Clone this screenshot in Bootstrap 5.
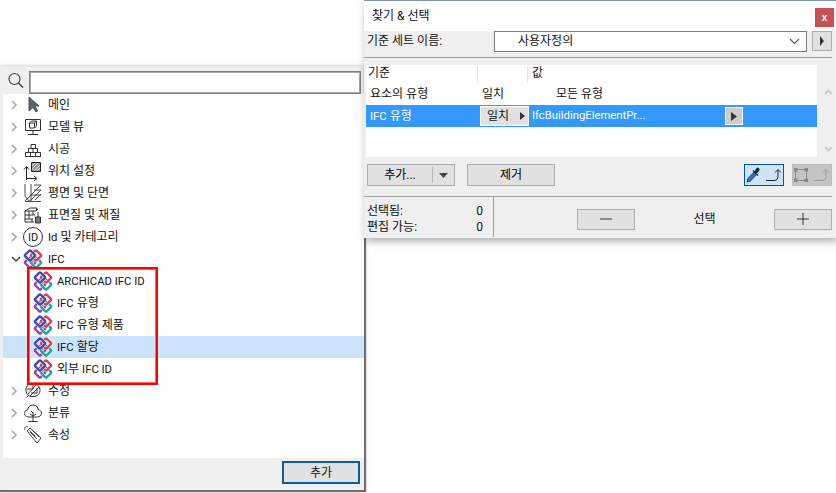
<!DOCTYPE html>
<html lang="ko"><head><meta charset="utf-8"><title>찾기 & 선택</title>
<link rel="stylesheet" href="https://cdn.jsdelivr.net/npm/bootstrap@5.3.0/dist/css/bootstrap.min.css">
<style>
html,body{margin:0;background:#fff;overflow:hidden}
body{font:12px/1.2 Roboto,"Noto Sans CJK KR",sans-serif;color:#111;width:836px;height:493px;position:relative}
svg{display:block;flex:none}
.lat{font-size:11.3px}
.pane-left{position:absolute;left:0;top:66px;width:366px;height:426px;background:#efefef;border-right:2px solid #6f6f6f;border-bottom:2px solid #6f6f6f;border-top:1px solid #e4e4e4;box-shadow:0 0 3px rgba(0,0,0,.25)}
.pane-right{position:absolute;left:364px;top:0;width:472px;height:238px;background:#efefef;border-top:1px solid #7f97ad;box-shadow:2px 3px 8px rgba(0,0,0,.35)}
.finder{height:27px;padding-left:3px}
.finder input{margin:3px 0 0 2px;width:332px;height:23px;border:1px solid #808080;outline:1px solid #a8a8a8;outline-offset:-2px;background:#fff;padding:0}
.tree{background:#fff;margin-left:3px;height:364px}
.trow{height:22px;padding-left:8px}
.trow.kid{padding-left:30px}
.trow .chev{width:10px;margin-right:2px}
.trow .ico{width:20px;margin-right:5px}
.trow.kid .ico{margin-right:4px}
.trow .tlabel{padding-top:1px}
.trow.sel{background:#cce4fb}
.foot{height:32px;padding:3px 4px 3px 0}
.okbtn{width:78px;height:23px;border:2px solid #0b5c9e;background:#e1e1e1;font-size:12px;padding:0;line-height:18px;color:#111}
.redbox{position:absolute;left:27px;top:200px;width:131px;height:118px;border:2px solid #f00;outline:1px solid #f66;outline-offset:-3px;pointer-events:none}
.ttl{height:30px;background:#fff;padding-left:8px;font-size:12px}
.xbtn{position:absolute;right:2px;top:7px;width:19px;height:19px;background:#c75050;color:#fff;font:bold 10px/19px "Liberation Sans",sans-serif;text-align:center}
.setrow{height:26px;padding-left:3px}
.setlabel{width:127px;line-height:20px}
.combo{width:313px;height:21px;border:1px solid #7a7a7a;background:#fff;padding:0 6px 0 23px}
.sqbtn{width:20px;height:20px;margin-left:5px;background:#e1e1e1;border:1px solid #adadad}
.rule{height:1px;background:#a0a0a0;width:468px}
.gridwrap{margin-top:7px;height:92px}
.table-area{width:451px;margin-left:2px;background:#fff;height:92px}
.hdr{height:18px;padding-top:1px}
.hcell{border-right:1px solid #e6e6e6;height:17px;padding-left:2px}
.rowa,.rowb{height:22px}
.rowb{background:#3399ff;color:#fff}
.matchbtn{width:49px;height:20px;background:#e1e1e1;color:#111;border:1px solid #fff;padding:0 3px 0 6px;margin-right:3px}
.arrowbtn{width:18px;height:18px;background:#ccc;border:1px solid #fff;margin-left:auto;margin-right:74px}
.scroller{width:16px;margin-left:3px;padding:24px 0 5px}
.actions{height:39px;padding:7px 0 0 3px}
.gbtn{height:22px;background:#e1e1e1;border:1px solid #adadad;padding:0}
.splitlabel{width:65px;border-right:1px solid #b8b8b8;line-height:16px}
.removebtn{width:88px;margin-left:12px}
.tools{gap:8px;margin-right:4px}
.tool{width:40px;height:22px}
.tool.on{background:#cce4f7;border:1px solid #005499}
.tool.off{background:#c4c4c4;border:1px solid #bbb}
.stats{height:41px;padding-left:3px;border-top:1px solid #a0a0a0;width:468px}
.statcol{width:127px;height:100%;border-right:1px solid #a0a0a0;padding:4px 10px 0 0;line-height:16px}
.pm{width:58px;height:21px}
.seltxt{flex:1;text-align:center}
.pmrow{padding:4px 0 0 83px}
</style></head><body>

<section class="pane-left d-flex flex-column">
 <div class="finder d-flex align-items-center">
  <svg width="20" height="20" viewBox="0 0 20 20" class="ms-1"><circle cx="7.500" cy="8" r="5.500" fill="none" stroke="#444" stroke-width="1.2"/><path d="M11.500 12l4.500 4.500" stroke="#444" stroke-width="1.5"/></svg>
  <input type="text" aria-label="search">
 </div>
 <div class="tree" id="tree"></div>
 <div class="foot d-flex justify-content-end"><button class="okbtn">추가</button></div>
 <div class="redbox"></div>
</section>

<section class="pane-right d-flex flex-column">
 <div class="ttl d-flex align-items-center">찾기 &amp; 선택<span class="xbtn">x</span></div>
 <div class="setrow d-flex align-items-start">
  <span class="setlabel">기준 세트 이름:</span>
  <div class="combo d-flex align-items-center justify-content-between"><span>사용자정의</span>
   <svg width="11" height="7" viewBox="0 0 11 7"><path d="M1 1l4.500 4.500L10 1" fill="none" stroke="#555" stroke-width="1.1"/></svg></div>
  <div class="sqbtn d-flex align-items-center justify-content-center"><svg width="6" height="10"><path d="M1 0l4 5-4 5z" fill="#333"/></svg></div>
 </div>
 <div class="rule"></div>
 <div class="gridwrap d-flex">
  <div class="table-area">
   <div class="hdr d-flex">
    <div class="hcell" style="width:112px">기준</div><div class="hcell" style="width:50px"></div><div class="ps-1">값</div>
   </div>
   <div class="rowa d-flex align-items-center ps-1">
    <span style="width:112px">요소의 유형</span><span style="width:74px">일치</span><span>모든 유형</span>
   </div>
   <div class="rowb d-flex align-items-center ps-1">
    <span style="width:110px"><span class="lat">IFC</span> 유형</span>
    <div class="matchbtn d-flex align-items-center justify-content-between"><span>일치</span><svg width="5" height="8"><path d="M0 0l5 4-5 4z" fill="#333"/></svg></div>
    <span class="lat">IfcBuildingElementPr...</span>
    <div class="arrowbtn d-flex align-items-center justify-content-center"><svg width="6" height="9"><path d="M0 0l6 4.500-6 4.500z" fill="#333"/></svg></div>
   </div>
  </div>
  <div class="scroller d-flex flex-column justify-content-between align-items-center">
   <svg width="9" height="6"><path d="M1 5l3.500-3.500L8 5" fill="none" stroke="#c4c4c4" stroke-width="1.6"/></svg>
   <svg width="9" height="6"><path d="M1 1l3.500 3.500L8 1" fill="none" stroke="#c4c4c4" stroke-width="1.6"/></svg>
  </div>
 </div>
 <div class="actions d-flex">
  <button class="gbtn d-flex align-items-center" style="width:88px"><span class="splitlabel">추가...</span><svg class="mx-auto" width="9" height="5"><path d="M0 0h9l-4.500 5z" fill="#444"/></svg></button>
  <button class="gbtn removebtn">제거</button>
  <div class="ms-auto d-flex tools">
   <div class="tool on d-flex align-items-center justify-content-center gap-1">
    <svg width="16" height="18" viewBox="0 0 16 18"><path d="M9 6l-6 6.500L2 16l3.500-1 6-6.500z" fill="#2c78c8" stroke="#17324f" stroke-width=".9"/><path d="M8 4.500l5 5M10.500 5l1.500-2.500c1-.8 2.500.7 1.800 1.800L11.500 7z" fill="#1c2630" stroke="#1c2630" stroke-width="1.200"/></svg>
    <svg width="18" height="16" viewBox="0 0 18 16"><path d="M1 13.500h8c3 0 4-2 4-4V3M10 5.500L13 2.500l3 3" fill="none" stroke="#222" stroke-width="1"/></svg>
   </div>
   <div class="tool off d-flex align-items-center justify-content-center gap-1">
    <svg width="16" height="16" viewBox="0 0 16 16"><path d="M2.500 2.500h11v11h-11z" fill="none" stroke="#888"/><path d="M1 1h3.500v3.500H1zM11.500 1H15v3.500h-3.500zM1 11.500h3.500V15H1zM11.500 11.500H15V15h-3.500z" fill="#888"/></svg>
    <svg width="18" height="16" viewBox="0 0 18 16"><path d="M1 13.500h8c3 0 4-2 4-4V3M10 5.500L13 2.500l3 3" fill="none" stroke="#9a9a9a" stroke-width="1"/></svg>
   </div>
  </div>
 </div>
 <div class="stats d-flex align-items-center">
  <div class="statcol d-flex flex-column justify-content-center">
   <div class="d-flex justify-content-between"><span>선택됨:</span><span>0</span></div>
   <div class="d-flex justify-content-between"><span>편집 가능:</span><span>0</span></div>
  </div>
  <div class="flex-grow-1 d-flex align-items-center pmrow">
   <button class="gbtn pm d-flex align-items-center justify-content-center"><svg width="12" height="2"><path d="M0 1h12" stroke="#333"/></svg></button>
   <span class="seltxt">선택</span>
   <button class="gbtn pm d-flex align-items-center justify-content-center" ><svg width="12" height="12"><path d="M0 6h12M6 0v12" stroke="#333"/></svg></button>
  </div>
 </div>
</section>

<script>
const ring=(cx,cy,c)=>{const r=`x="${cx-3.900}" y="${cy-3.900}" width="7.800" height="7.800" rx="1.200" transform="rotate(45 ${cx} ${cy})" fill="none"`;
 return `<rect ${r} stroke="#fff" stroke-width="3.100"/><rect ${r} stroke="${c}" stroke-width="2.400"/>`;};
const ifc=`<svg width="20" height="20" viewBox="0 0 20 20">`+ring(7,13.500,'#a63fae')+ring(13,13.500,'#1fa79c')+ring(13,6.500,'#de3f5c')+ring(7,6.500,'#3e4caa')+`</svg>`;
const s=(b)=>`<svg width="20" height="20" viewBox="0 0 20 20" fill="none" stroke="#333" stroke-width="1">${b}</svg>`;
const icons={
 main:s('<path d="M6 2v14l4-3.500 3 4.500 1.500-1-2.500-5h4z" fill="#5b6468" stroke="#4a5256"/>'),
 view:s('<path d="M2.500 2.500h15v11h-15zM10 13.500v3.500M5 17.500h10"/><path d="M6.500 6h5v5h-5zM6.500 6l2-2h5v5l-2 2M11.500 6l2-2"/>'),
 build:s('<path d="M2 17.500h16M2.500 13.500h15v4h-15zM5.500 9.500h9v4h-9zM8 5.500h4.500v4H8zM7.500 13.500v4M12.500 13.500v4M10 9.500v4"/>'),
 pos:`<svg width="20" height="20" viewBox="0 0 20 20" fill="none" stroke="#222"><path d="M3.500 19V6M1 8.500l2.500-3 2.500 3M3.500 17.500H13M11 15l3 2.500-3 2.500"/><path d="M8.500 1.500h9v9h-9z" fill="#999"/><path d="M9 8l6-6M11 10l6-6M9 5l3-3M14 10l3-3" stroke="#ddd"/></svg>`,
 plan:s('<path d="M2 1v12l4 5h2V1M2 18L18 2M8 17l10-10M12 17l6-6M11 2h7M11 7h7M8 12h10M2 18.500h16" stroke-width=".9"/>'),
 mat:s('<path d="M2 6l5-3h7l-1 3H2v11h9M2 10h10M2 14h8M6 6v4M10 6v4M6 10v4M9 14v3M13 6l2-2"/><path d="M15 7v5M12.500 12h5v6h-5z" fill="#777"/>'),
 id:`<svg width="22" height="22" viewBox="0 0 22 22" style="margin:-1px"><circle cx="11" cy="11" r="9.500" fill="none" stroke="#333"/><text x="11" y="15" text-anchor="middle" font-size="11" font-family="Roboto" fill="#222">ID</text></svg>`,
 mod:s('<path d="M10 2.500C5 2.500 2.500 6 3 10c.5 3 2.500 5 5 5.500h4c3-1 5-3 5-6 0-4-3-7-7-7zM5 13l8-9M7 15l9-9M4 8h6V4M8 12h6V7M3.500 16.500l2-2"/>'),
 cls:s('<path d="M10 18.500V9M5.500 18.500h9M7 11l3 2 3-2M10 10l-2-2M6 14c-3 0-5-2-4.500-4.500C2 7.500 3.500 7 4.500 7 5 4 7 2 10 2s5 2 5.500 5c1.500 0 3 1 3 3 0 2.500-2 4-4.500 4H6z"/>'),
 tag:s('<path d="M4 6l3-3 11 10-4 5zM2 5C1 2 3 1 5 2M7 7l7 7M9 5l7 7M6.500 5.500l6 6" stroke-width=".9"/>')
};
const rows=[['메인','main'],['모델 뷰','view'],['시공','build'],['위치 설정','pos'],['평면 및 단면','plan'],['표면질 및 재질','mat'],['Id 및 카테고리','id'],['IFC','ifc',2],
['ARCHICAD IFC ID','ifc',1],['IFC 유형','ifc',1],['IFC 유형 제품','ifc',1],['IFC 할당','ifc',3],['외부 IFC ID','ifc',1],['수정','mod'],['분류','cls'],['속성','tag']];
const cR=`<svg width="7" height="10" viewBox="0 0 7 10"><path d="M1 1l4 4-4 4" fill="none" stroke="#aaa" stroke-width="1.700"/></svg>`;
const cD=`<svg width="10" height="7" viewBox="0 0 10 7"><path d="M1 1l4 4 4-4" fill="none" stroke="#444" stroke-width="1.500"/></svg>`;
const lat=t=>t.replace(/[A-Za-z]+(?: [A-Za-z]+)*/g,m=>`<span class="lat">${m}</span>`);
document.getElementById('tree').innerHTML=rows.map(([t,i,k])=>{
 const kid=k==1||k==3;
 return `<div class="trow d-flex align-items-center${kid?' kid':''}${k==3?' sel':''}">${kid?'':`<span class="chev d-flex align-items-center">${k==2?cD:cR}</span>`}<span class="ico d-flex justify-content-center">${i=='ifc'?ifc:icons[i]}</span><span class="tlabel">${lat(t)}</span></div>`;}).join('');
</script>
</body></html>
